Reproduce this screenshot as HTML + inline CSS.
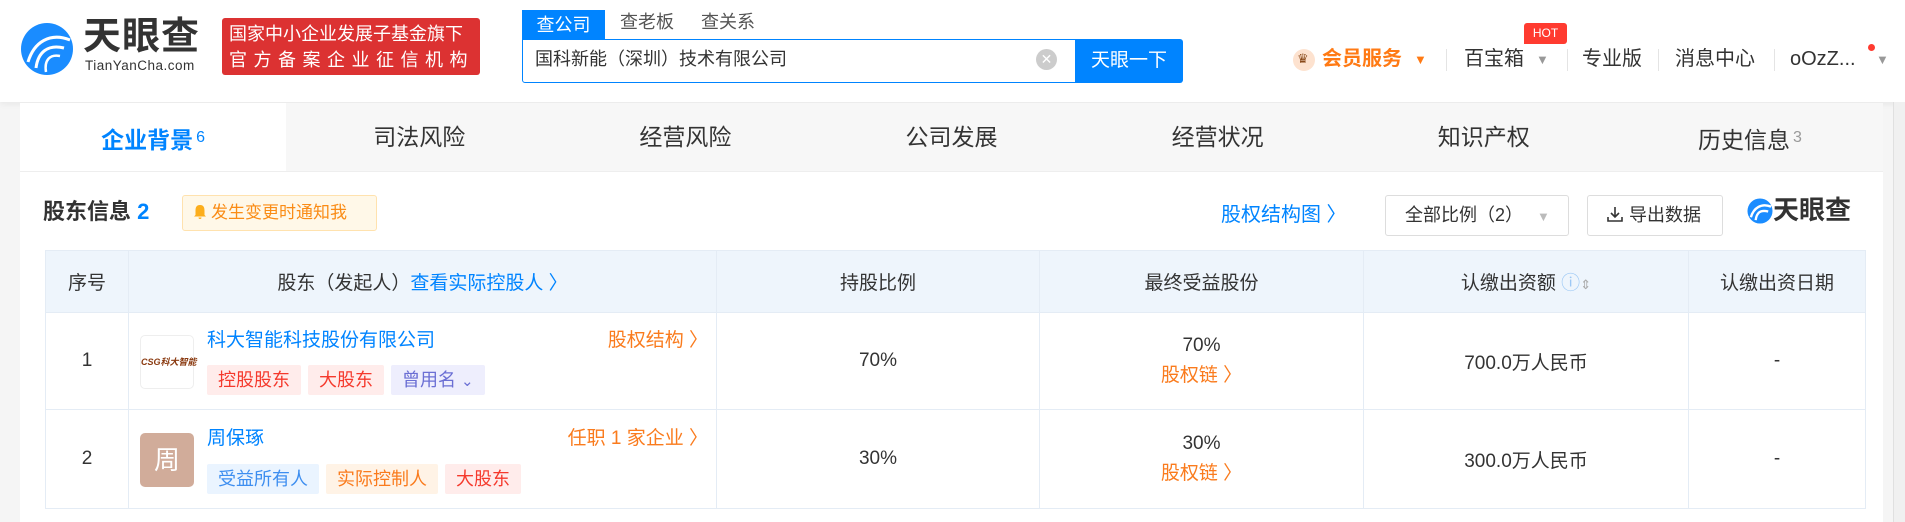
<!DOCTYPE html>
<html><head><meta charset="utf-8">
<style>
*{margin:0;padding:0;box-sizing:border-box}
body{width:1905px;height:522px;overflow:hidden;background:#f5f5f5;font-family:"Liberation Sans","Noto Sans CJK SC",sans-serif;color:#333;position:relative}
.a{position:absolute;white-space:nowrap;line-height:1.2}
.hdr{position:absolute;left:0;top:0;width:1905px;height:102px;background:#fff;box-shadow:0 2px 6px rgba(0,0,0,.06)}
.sep{position:absolute;top:49px;width:1px;height:22px;background:#e4e4e4}
.tabs{position:absolute;left:20px;top:103px;width:1863px;height:69px;background:#f7f7f7;border-bottom:1px solid #eee;display:flex}
.tabs div{flex:1;text-align:center;line-height:69px;font-size:23px;color:#333}
.tabs div.on{background:#fff;color:#0084ff;font-weight:bold}
.tabs sup{font-size:16px;font-weight:normal;vertical-align:6px;color:#999;margin-left:3px}
.tabs .on sup{color:#0084ff}
.card{position:absolute;left:20px;top:172px;width:1863px;height:350px;background:#fff}
table{position:absolute;left:45px;top:250px;width:1821px;border-collapse:collapse;font-size:19px}
td,th{border:1px solid #e4ecf5;font-weight:normal;color:#333}
th{background:#eef5fc;height:62px}
.tag{display:inline-block;height:30px;line-height:30px;padding:0 11px;font-size:18px;margin-right:7px;border-radius:2px}
.blue{color:#0084ff}.org{color:#fa7b1d}
</style></head><body>
<div class="hdr"></div>
<svg class="a" style="left:20px;top:22px" width="54" height="54" viewBox="0 0 54 54">
<circle cx="27" cy="27" r="26" fill="#1a8cff"/>
<path d="M8 40 C14 20 30 10 50 18" stroke="#fff" stroke-width="3" fill="none"/>
<path d="M16 46 C18 30 28 22 44 26" stroke="#fff" stroke-width="3" fill="none"/>
<path d="M26 50 C24 38 30 32 40 34" stroke="#fff" stroke-width="2.5" fill="none"/>
</svg>
<div class="a" style="left:83px;top:17px;font-size:38px;line-height:40px;font-weight:bold;color:#333;letter-spacing:1px">天眼查</div>
<div class="a" style="left:85px;top:58px;font-size:13.5px;line-height:16px;color:#333;letter-spacing:.5px">TianYanCha.com</div>
<div class="a" style="left:222px;top:18px;width:258px;height:57px;background:#dc3232;border-radius:3px;color:#fff;font-size:18px;line-height:26px;padding:3px 0 0 7px">国家中小企业发展子基金旗下<br><span style="letter-spacing:6.5px">官方备案企业征信机构</span></div>
<div class="a" style="left:522px;top:10px;width:83px;height:30px;background:#0084ff;color:#fff;font-size:18px;text-align:center;line-height:30px">查公司</div>
<div class="a" style="left:620px;top:12px;font-size:18px;color:#555">查老板</div>
<div class="a" style="left:701px;top:12px;font-size:18px;color:#555">查关系</div>
<div class="a" style="left:522px;top:39px;width:560px;height:44px;border:1px solid #0084ff;border-radius:0 0 0 3px"></div>
<div class="a" style="left:535px;top:49px;font-size:18px;color:#333">国科新能（深圳）技术有限公司</div>
<div class="a" style="left:1036px;top:49px;width:21px;height:21px;border-radius:50%;background:#ccc;color:#fff;font-size:14px;text-align:center;line-height:21px">✕</div>
<div class="a" style="left:1075px;top:39px;width:108px;height:44px;background:#0084ff;border-radius:0 3px 3px 0;color:#fff;font-size:19px;text-align:center;line-height:44px">天眼一下</div>
<div class="a" style="left:1293px;top:49px;width:22px;height:22px;border-radius:50%;background:#fde2cf"></div>
<div class="a" style="left:1297px;top:51px;font-size:13px;color:#8a4a1a">♛</div>
<div class="a" style="left:1322px;top:47px;font-size:20px;font-weight:bold;color:#ff7a14">会员服务</div>
<div class="a" style="left:1414px;top:52px;font-size:13px;color:#ff7a14">▼</div>
<div class="sep" style="left:1446px"></div>
<div class="a" style="left:1464px;top:47px;font-size:20px;color:#333">百宝箱</div>
<div class="a" style="left:1536px;top:52px;font-size:13px;color:#999">▼</div>
<div class="a" style="left:1524px;top:23px;width:43px;height:21px;background:#ff3b30;border-radius:3px 3px 3px 0;color:#fff;font-size:12px;text-align:center;line-height:21px">HOT</div>
<div class="sep" style="left:1567px"></div>
<div class="a" style="left:1582px;top:47px;font-size:20px;color:#333">专业版</div>
<div class="sep" style="left:1658px"></div>
<div class="a" style="left:1675px;top:47px;font-size:20px;color:#333">消息中心</div>
<div class="sep" style="left:1774px"></div>
<div class="a" style="left:1790px;top:47px;font-size:20px;color:#333">oOzZ...</div>
<div class="a" style="left:1868px;top:44px;width:7px;height:7px;border-radius:50%;background:#ff3b30"></div>
<div class="a" style="left:1876px;top:52px;font-size:13px;color:#999">▼</div>
<div class="a" style="left:1893px;top:102px;width:12px;height:420px;background:#f0f0f0;border-left:1px solid #e0e0e0"></div>

<div class="tabs"><div class="on">企业背景<sup>6</sup></div><div>司法风险</div><div>经营风险</div><div>公司发展</div><div>经营状况</div><div>知识产权</div><div>历史信息<sup>3</sup></div></div>
<div class="card"></div>
<div class="a" style="left:43px;top:199px;font-size:22px;font-weight:bold;color:#333">股东信息 <span style="color:#0084ff">2</span></div>
<div class="a" style="left:182px;top:195px;width:195px;height:36px;background:#fff8e8;border:1px solid #ffe2ae;border-radius:3px;color:#fa8c16;font-size:17px;line-height:34px;padding-left:10px"><svg width="14" height="16" viewBox="0 0 14 16" style="vertical-align:-2px"><path d="M7 1 C3 1 2.5 4 2.5 7 L2.5 11 L1 12.5 L13 12.5 L11.5 11 L11.5 7 C11.5 4 11 1 7 1Z M5.5 13.5 a1.5 1.5 0 0 0 3 0Z" fill="#fcae1c"/></svg><span style="margin-left:4px">发生变更时通知我</span></div>
<div class="a blue" style="left:1221px;top:203px;font-size:20px">股权结构图 〉</div>
<div class="a" style="left:1385px;top:195px;width:184px;height:41px;border:1px solid #ddd;border-radius:3px;font-size:18px;line-height:39px;padding-left:19px">全部比例（2）<span style="color:#bbb;font-size:13px;margin-left:14px">▼</span></div>
<div class="a" style="left:1587px;top:195px;width:136px;height:41px;border:1px solid #ddd;border-radius:3px;font-size:18px;line-height:39px;padding-left:18px"><svg width="18" height="18" viewBox="0 0 18 18" style="vertical-align:-2px"><path d="M9 2 V12 M5 8 L9 12 L13 8 M2 12 V16 H16 V12" stroke="#333" stroke-width="1.6" fill="none"/></svg> 导出数据</div>
<svg class="a" style="left:1747px;top:198px" width="26" height="26" viewBox="0 0 54 54"><circle cx="27" cy="27" r="26" fill="#1a8cff"/><path d="M8 40 C14 20 30 10 50 18" stroke="#fff" stroke-width="5" fill="none"/><path d="M18 46 C20 30 28 24 44 28" stroke="#fff" stroke-width="5" fill="none"/></svg>
<div class="a" style="left:1773px;top:195px;font-size:26px;font-weight:bold;color:#333">天眼查</div>

<table>
<tr><th style="width:83px">序号</th><th style="width:588px">股东（发起人）<span class="blue">查看实际控股人 〉</span></th><th style="width:323px">持股比例</th><th style="width:324px">最终受益股份</th><th style="width:325px">认缴出资额 <span style="color:#9cc8f5">ⓘ</span><span style="color:#aaa;font-size:13px">⇕</span></th><th>认缴出资日期</th></tr>
<tr style="height:97px"><td align="center">1</td><td style="position:relative">
<div class="a" style="left:11px;top:22px;width:54px;height:54px;border:1px solid #eee;border-radius:5px;font-size:9px;color:#8a3a10;font-weight:bold;text-align:center;line-height:52px;font-style:italic">CSG科大智能</div>
<div class="a blue" style="left:78px;top:17px">科大智能科技股份有限公司</div>
<div class="a org" style="right:8px;top:17px">股权结构 〉</div>
<div class="a" style="left:78px;top:52px"><span class="tag" style="background:#ffeceb;color:#f5392c">控股股东</span><span class="tag" style="background:#ffeceb;color:#f5392c">大股东</span><span class="tag" style="background:#eeeefd;color:#6b6fd4">曾用名 <small>⌄</small></span></div>
</td><td align="center">70%</td><td align="center" style="line-height:30px">70%<br><span class="org">股权链 〉</span></td><td align="center">700.0万人民币</td><td align="center">-</td></tr>
<tr style="height:99px"><td align="center">2</td><td style="position:relative">
<div class="a" style="left:11px;top:23px;width:54px;height:54px;border-radius:5px;background:#d1ac9a;color:#fff;font-size:26px;text-align:center;line-height:54px">周</div>
<div class="a blue" style="left:78px;top:18px">周保琢</div>
<div class="a org" style="right:8px;top:18px">任职 1 家企业 〉</div>
<div class="a" style="left:78px;top:54px"><span class="tag" style="background:#eaf4ff;color:#3d8ef0">受益所有人</span><span class="tag" style="background:#fff3e6;color:#fa7b1d">实际控制人</span><span class="tag" style="background:#ffeceb;color:#f5392c">大股东</span></div>
</td><td align="center">30%</td><td align="center" style="line-height:30px">30%<br><span class="org">股权链 〉</span></td><td align="center">300.0万人民币</td><td align="center">-</td></tr>
</table>
</body></html>
